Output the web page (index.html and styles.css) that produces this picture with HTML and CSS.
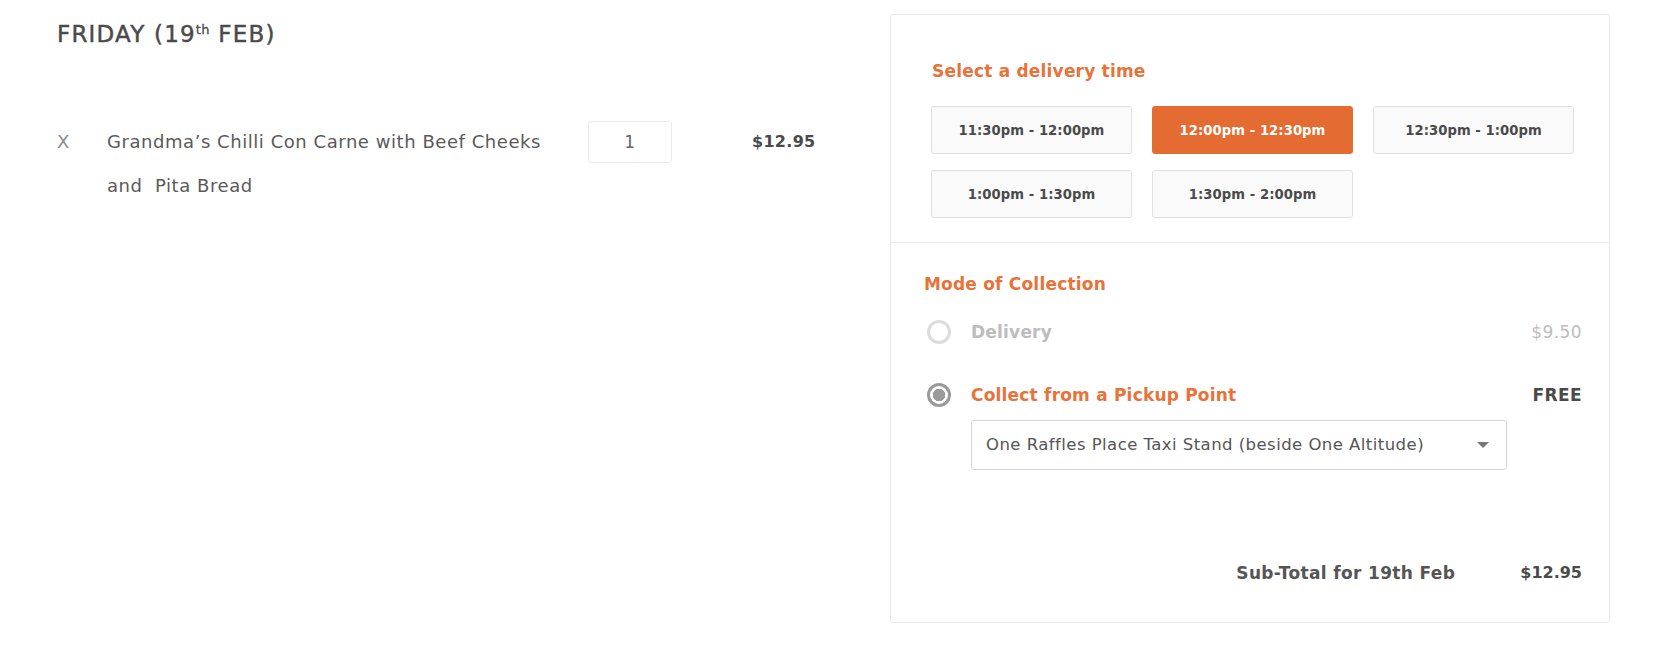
FILE: index.html
```html
<!DOCTYPE html>
<html lang="en">
<head>
<meta charset="utf-8">
<title>Cart - Friday</title>
<link rel="stylesheet" href="styles.css">
</head>
<body>
<div class="page">
  <section class="day">
    <h2 class="day-title">FRIDAY (19<sup>th</sup> FEB)</h2>
    <div class="item">
      <span class="item-remove">X</span>
      <span class="item-name">Grandma’s Chilli Con Carne with Beef Cheeks and&nbsp; Pita Bread</span>
      <span class="item-qty">1</span>
      <span class="item-price">$12.95</span>
    </div>
  </section>

  <aside class="panel">
    <div class="panel-times">
      <h3 class="label">Select a delivery time</h3>
      <div class="slots">
        <button class="slot">11:30pm - 12:00pm</button>
        <button class="slot slot-active">12:00pm - 12:30pm</button>
        <button class="slot">12:30pm - 1:00pm</button>
        <button class="slot">1:00pm - 1:30pm</button>
        <button class="slot">1:30pm - 2:00pm</button>
      </div>
    </div>
    <div class="panel-mode">
      <h3 class="label">Mode of Collection</h3>
      <div class="option option-disabled">
        <span class="radio"></span>
        <span class="option-name">Delivery</span>
        <span class="option-price">$9.50</span>
      </div>
      <div class="option option-selected">
        <span class="radio radio-on"></span>
        <div class="option-body">
          <span class="option-name">Collect from a Pickup Point</span>
          <div class="select">
            <span>One Raffles Place Taxi Stand (beside One Altitude)</span>
            <span class="caret"></span>
          </div>
        </div>
        <span class="option-price">FREE</span>
      </div>
      <div class="subtotal">
        <span class="subtotal-label">Sub-Total for 19th Feb</span>
        <span class="subtotal-value">$12.95</span>
      </div>
    </div>
  </aside>
</div>
</body>
</html>
```
FILE: styles.css
```css
* { box-sizing: border-box; }
html, body { margin: 0; background: #fff; }
body {
  font-family: "DejaVu Sans", "Liberation Sans", sans-serif;
  color: #555;
}
.page {
  display: flex;
  align-items: flex-start;
  padding-top: 14px;
}
.day {
  width: 890px;
  padding-left: 57px;
}
.day-title {
  margin: 5px 0 0;
  font-size: 23px;
  line-height: 30px;
  font-weight: normal;
  letter-spacing: 1.2px;
  color: #4a4a4a;
  -webkit-text-stroke: 0.45px #4a4a4a;
}
.day-title sup {
  font-size: 13px;
  line-height: 0;
  vertical-align: 8px;
  letter-spacing: 0.3px;
  -webkit-text-stroke: 0.3px #4a4a4a;
}
.item {
  display: grid;
  grid-template-columns: 50px 481px 84px 1fr;
  align-items: start;
  margin-top: 71px;
  font-size: 18px;
  line-height: 44px;
  letter-spacing: 0.55px;
}
.item-remove { color: #8d8d8d; }
.item-name { color: #5a5a5a; padding-right: 34px; }
.item-qty {
  margin-top: 1px;
  height: 42px;
  border: 1px solid #ebebeb;
  border-radius: 3px;
  text-align: center;
  line-height: 40px;
  font-size: 17px;
  color: #666;
}
.item-price {
  padding-left: 80px;
  font-weight: bold;
  font-size: 16px;
  letter-spacing: 0.3px;
  color: #4a4a4a;
}

.panel {
  width: 720px;
  border: 1px solid #e9e9e9;
  border-radius: 3px;
}
.label {
  margin: 0;
  font-size: 17px;
  line-height: 24px;
  font-weight: bold;
  color: #e8733a;
  letter-spacing: 0.2px;
}
.panel-times {
  padding: 44px 32px 24px 41px;
  border-bottom: 1px solid #ececec;
}
.slots {
  display: grid;
  grid-template-columns: repeat(3, 201px);
  column-gap: 20px;
  row-gap: 16px;
  margin-top: 23px;
  margin-left: -1px;
}
.slot {
  height: 48px;
  border: 1px solid #e1e1e1;
  border-radius: 3px;
  background: #fafafa;
  font-family: inherit;
  font-size: 13.2px;
  font-weight: bold;
  letter-spacing: 0.05px;
  color: #4a4a4a;
  padding: 0;
}
.slot-active {
  background: #e46b31;
  border-color: #e46b31;
  color: #fff;
}
.panel-mode {
  padding: 29px 27px 37px 33px;
}
.option {
  display: grid;
  grid-template-columns: 24px 1fr auto;
  column-gap: 20px;
  align-items: start;
  margin-left: 3px;
  font-size: 17px;
  line-height: 24px;
}
.option-disabled { margin-top: 24px; }
.option-selected { margin-top: 39px; }
.radio {
  width: 24px;
  height: 24px;
  border-radius: 50%;
  border: 3px solid #dcdcdc;
  background: #fff;
}
.radio-on {
  border-color: #9a9a9a;
  background: radial-gradient(circle, #9a9a9a 0 6px, #fff 6.5px);
}
.option-name {
  font-weight: bold;
  letter-spacing: 0.2px;
}
.option-disabled .option-name { color: #bdbdbd; }
.option-selected .option-name { color: #e8733a; }
.option-price {
  letter-spacing: 0.4px;
}
.option-disabled .option-price { color: #bdbdbd; }
.option-selected .option-price { color: #4a4a4a; font-weight: bold; }
.option-body {
  display: flex;
  flex-direction: column;
}
.select {
  display: flex;
  align-items: center;
  justify-content: space-between;
  margin-top: 13px;
  width: 536px;
  height: 50px;
  padding: 0 17px 0 14px;
  border: 1px solid #d6d6d6;
  border-radius: 3px;
  font-size: 16.5px;
  letter-spacing: 0.45px;
  color: #555;
}
.caret {
  width: 0;
  height: 0;
  border-left: 6px solid transparent;
  border-right: 6px solid transparent;
  border-top: 6px solid #777;
}
.subtotal {
  display: flex;
  justify-content: flex-end;
  gap: 65px;
  margin-top: 91px;
  font-size: 17px;
  line-height: 24px;
  font-weight: bold;
  letter-spacing: 0.35px;
  color: #555;
}
.subtotal-value {
  color: #4a4a4a;
  font-size: 16px;
  letter-spacing: 0;
}
```
